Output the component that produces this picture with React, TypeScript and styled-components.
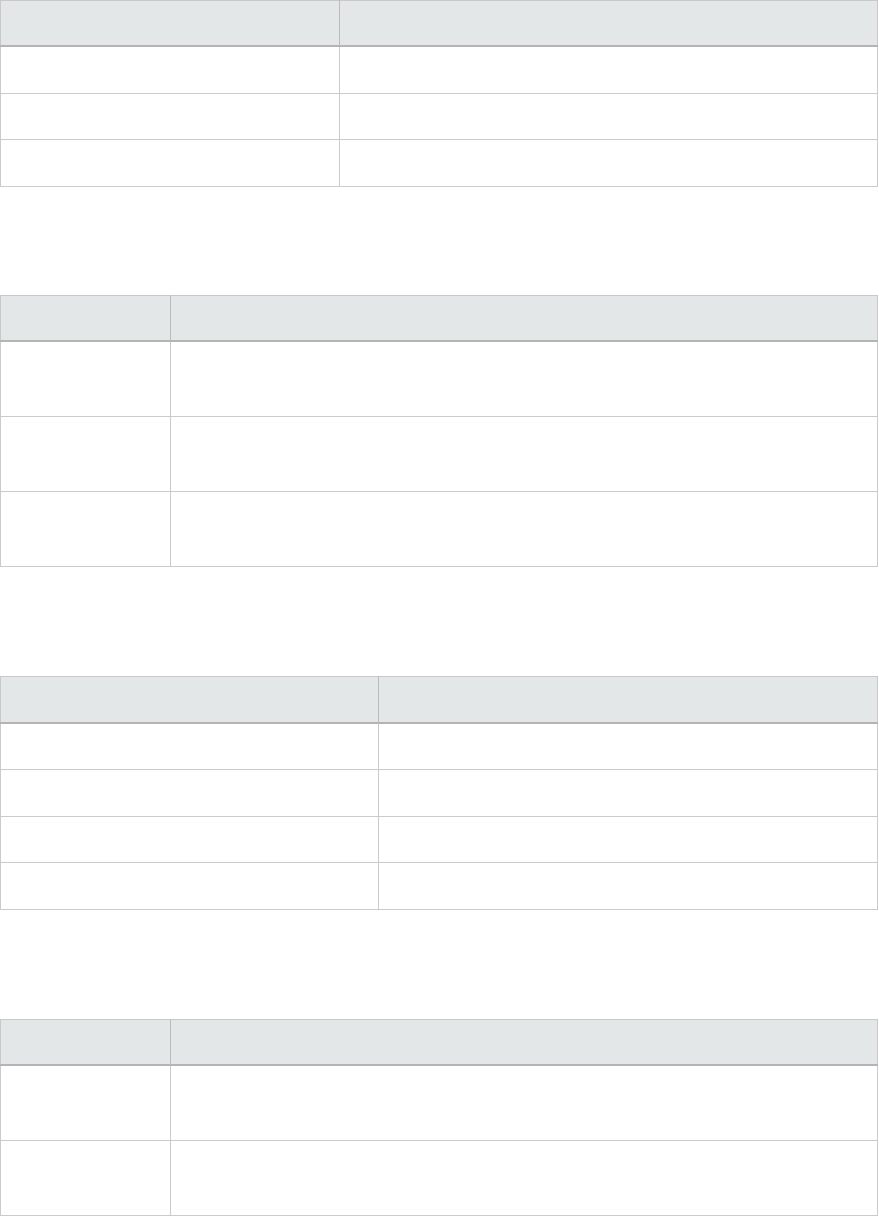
import styled, { createGlobalStyle } from "styled-components";

const GlobalStyle = createGlobalStyle`
	body {
		margin: 0;
		background: #ffffff;
		font-family: "Liberation Sans", Arial, sans-serif;
		font-size: 14px;
		color: #333333;
	}
`;

interface TableSpec {
	firstCol: number;
	rows: number;
	tall: boolean;
	headH: number;
	gap: number;
}

const tables: TableSpec[] = [
	{ firstCol: 339, rows: 3, tall: false, headH: 44, gap: 0 },
	{ firstCol: 170, rows: 3, tall: true, headH: 44, gap: 108 },
	{ firstCol: 378, rows: 4, tall: false, headH: 45, gap: 109 },
	{ firstCol: 170, rows: 3, tall: true, headH: 44, gap: 109 },
];

function App() {
	return (
		<>
			<GlobalStyle />
			<Page>
				{tables.map((t, i) => (
					<DataTable key={i} $gap={t.gap}>
						<colgroup>
							<col style={{ width: t.firstCol }} />
							<col />
						</colgroup>
						<thead>
							<tr>
								<HeadCell $h={t.headH}></HeadCell>
								<HeadCell $h={t.headH}></HeadCell>
							</tr>
						</thead>
						<tbody>
							{Array.from({ length: t.rows }).map((_, r) => (
								<tr key={r}>
									<Cell $tall={t.tall}></Cell>
									<Cell $tall={t.tall}></Cell>
								</tr>
							))}
						</tbody>
					</DataTable>
				))}
			</Page>
		</>
	);
}

// page is cut at the fold, the last table continues below
const Page = styled.div`
	display: flex;
	flex-direction: column;
	width: 878px;
	height: 1216px;
	overflow: hidden;
`;

const DataTable = styled.table<{ $gap: number }>`
	width: 878px;
	flex-shrink: 0;
	margin-top: ${p => p.$gap}px;
	border-collapse: collapse;
	table-layout: fixed;
	border: 1px solid #c9c9c9;
`;

const HeadCell = styled.th<{ $h: number }>`
	background-color: #e3e7e8;
	height: ${p => p.$h}px;
	padding: 0;
	border: 1px solid #c9c9c9;
	border-right-color: #bcbcbc;
	border-bottom: 2px solid #b4b4b4;
	&:last-child {
		border-right-color: #c9c9c9;
	}
`;

const Cell = styled.td<{ $tall?: boolean }>`
	height: ${p => (p.$tall ? 74 : 45.5)}px;
	padding: 0;
	border: 1px solid #cbcbcb;
`;

export default App;
